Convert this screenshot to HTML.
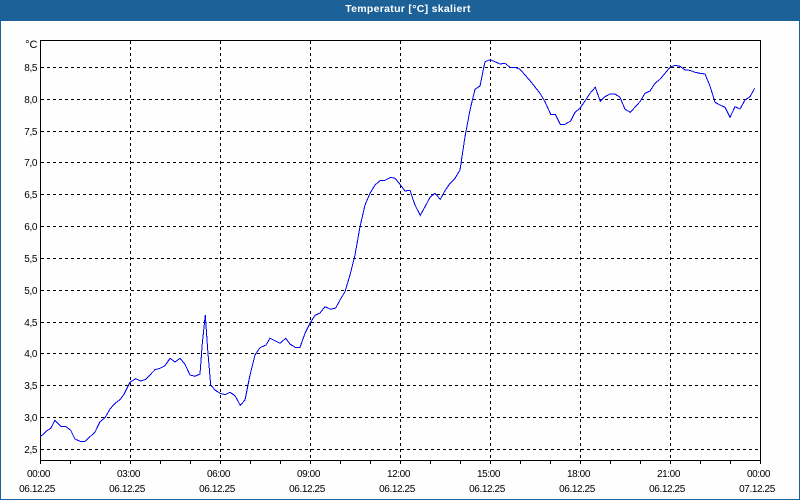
<!DOCTYPE html>
<html lang="de">
<head>
<meta charset="utf-8">
<title>Temperatur [°C] skaliert</title>
<style>
html,body{margin:0;padding:0;background:#fff;}
body{width:800px;height:500px;overflow:hidden;}
svg{display:block;}
text{font-family:"Liberation Sans",sans-serif;font-size:10px;fill:#000;letter-spacing:-.4px;}
.t{font-size:10.5px;font-weight:bold;fill:#fff;letter-spacing:.3px;}
.u{font-size:11px;letter-spacing:0;}
</style>
</head>
<body>
<svg width="800" height="500" viewBox="0 0 800 500" xmlns="http://www.w3.org/2000/svg">
<rect width="800" height="500" fill="#1c6198"/>
<rect x="1" y="21" width="798" height="478" fill="#fefefe"/>
<text class="t" x="408" y="12" text-anchor="middle">Temperatur [°C] skaliert</text>

<g shape-rendering="crispEdges" stroke="#000" stroke-width="1" fill="none">
<g stroke-dasharray="3 3">
<path d="M41 67.5H760M41 99.5H760M41 131.5H760M41 162.5H760M41 194.5H760M41 226.5H760M41 258.5H760M41 290.5H760M41 322.5H760M41 353.5H760M41 385.5H760M41 417.5H760M41 449.5H760"/>
<path d="M130.5 41V460M220.5 41V460M310.5 41V460M400.5 41V460M490.5 41V460M580.5 41V460M670.5 41V460"/>
</g>
<path d="M40.5 40.5H760.5V460.5H40.5Z"/>
<path d="M40.5 460V464M70.5 460V464M100.5 460V464M130.5 460V464M160.5 460V464M190.5 460V464M220.5 460V464M250.5 460V464M280.5 460V464M310.5 460V464M340.5 460V464M370.5 460V464M400.5 460V464M430.5 460V464M460.5 460V464M490.5 460V464M520.5 460V464M550.5 460V464M580.5 460V464M610.5 460V464M640.5 460V464M670.5 460V464M700.5 460V464M730.5 460V464M760.5 460V464"/>
</g>

<polyline shape-rendering="crispEdges" fill="none" stroke="#0000f0" stroke-width="1" points="40,436.7 43.3,434.3 46.7,431 50.7,428.3 55,420.3 60.7,426.3 66,426.7 70.7,430.3 75,439 80,441.3 85,441.3 90,436.7 95,432 100,421.7 105,417.7 110,409 115,403.3 120,399.7 124,394.3 130,382.3 135.7,378.7 140.7,381 145.7,379.3 155,369.7 160,368.3 165,365.7 170,358.3 175,362 180,358.3 185,364.3 190,375 195,376.3 200,374 202.3,343.3 205.3,315 207.7,350 210.7,385 215,390 220,393.3 225,394.7 230,392.3 235,395.7 240.3,405.3 245,400 250,375 255,355 260,347.7 266,345 270,338.3 275,340.7 280,343.3 285.7,338.3 290,344 295,347.3 300,347.3 305,333.3 310,323.3 315,315.3 320,313 325,306.7 330.7,309.3 335.7,308 340,300 345,291.7 350,275 355,255 360,226.7 365,205 370,193.3 375,185 380,180.7 385,180.3 390.7,177.3 395,178.3 400,184.3 405,191 410,190.3 415,205 420.3,215.3 425,206.7 430,197.3 435,193.3 440.3,199.3 445,190.7 450,183.3 455,178.3 460,170 465,136.7 470,110 475,89.3 480,86 485,61.7 490,59.7 495,61.7 500,64 505,63.3 510,67.3 515,67.3 520,69.3 530,80.7 540,93.3 545,101.7 550.7,114.3 555.3,114.3 560.3,124.3 565,124.3 570.7,121 575,112.3 580,108.3 590,93.3 595.3,87.3 600.3,101.3 605,96.7 610,94 615,94 620,97.3 625,109.3 630.3,112.3 640,101.7 645,93.3 650,91 655,83.3 660,79.3 670,67.3 675,65.3 680,66.3 685,70 690,70.3 695,72.3 700,73.3 705,74 710,86 715,102.3 720,105 725,107.3 730,117.3 735,106.7 740,109 745,100 750,96.7 754.7,88.3"/>

<g text-anchor="end">
<text class="u" x="37.5" y="48">°C</text>
<text x="37" y="71">8,5</text>
<text x="37" y="103">8,0</text>
<text x="37" y="135">7,5</text>
<text x="37" y="166">7,0</text>
<text x="37" y="198">6,5</text>
<text x="37" y="230">6,0</text>
<text x="37" y="262">5,5</text>
<text x="37" y="294">5,0</text>
<text x="37" y="326">4,5</text>
<text x="37" y="357">4,0</text>
<text x="37" y="389">3,5</text>
<text x="37" y="421">3,0</text>
<text x="37" y="453">2,5</text>
</g>

<g text-anchor="middle">
<text x="38.5" y="477">00:00</text>
<text x="128.5" y="477">03:00</text>
<text x="218.5" y="477">06:00</text>
<text x="308.5" y="477">09:00</text>
<text x="398.5" y="477">12:00</text>
<text x="488.5" y="477">15:00</text>
<text x="578.5" y="477">18:00</text>
<text x="668.5" y="477">21:00</text>
<text x="758.5" y="477">00:00</text>
<text x="37" y="492">06.12.25</text>
<text x="127" y="492">06.12.25</text>
<text x="217" y="492">06.12.25</text>
<text x="307" y="492">06.12.25</text>
<text x="397" y="492">06.12.25</text>
<text x="487" y="492">06.12.25</text>
<text x="577" y="492">06.12.25</text>
<text x="667" y="492">06.12.25</text>
<text x="757" y="492">07.12.25</text>
</g>
</svg>
</body>
</html>
